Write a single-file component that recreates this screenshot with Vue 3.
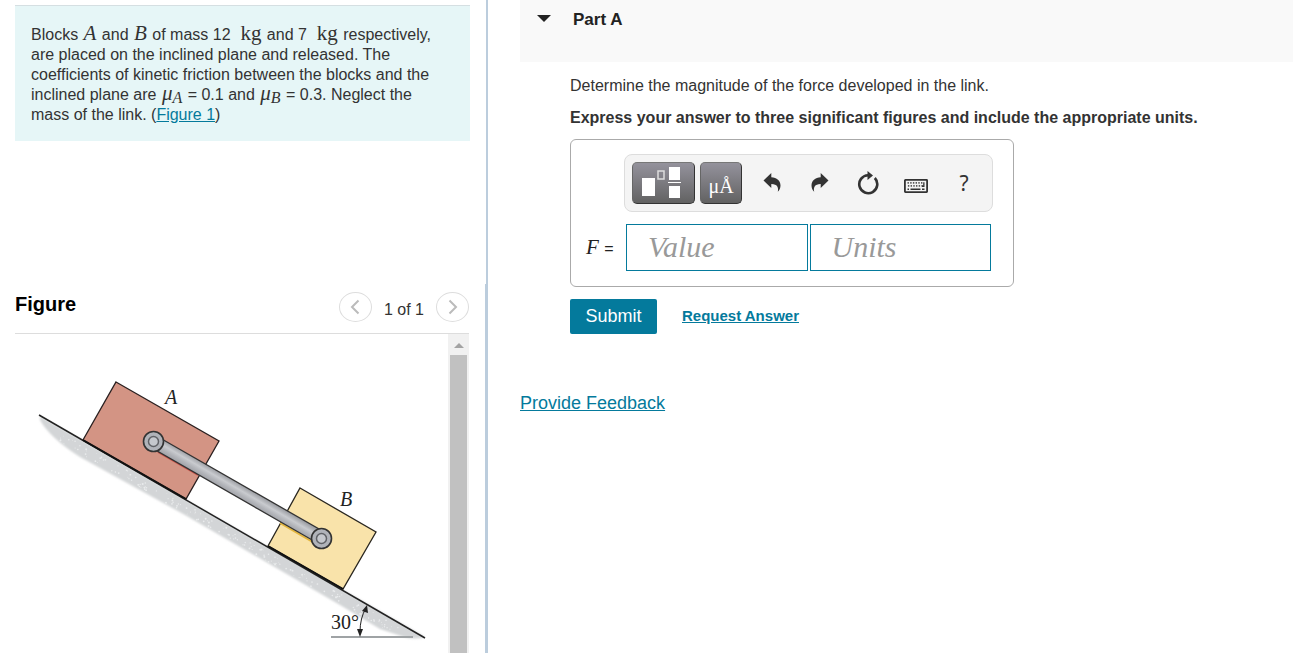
<script setup>
import { ref } from 'vue'

const value = ref('')
const units = ref('')

const keyDots = []
for (let row = 0; row < 2; row++) {
  for (let col = 0; col < 6; col++) {
    keyDots.push({ x: 3.5 + col * 2.7 + row * 0.4, y: 3.2 + row * 3 })
  }
}

// Light flecks scattered along the band below the incline
let seed = 7
const random = () => {
  seed = (seed * 16807) % 2147483647
  return seed / 2147483647
}
const specks = Array.from({ length: 170 }, () => {
  const along = 20 + random() * 340
  const depth = 5 + random() * 10
  return { x: 40 + along, y: 415 + along * 0.578 + depth, r: 0.4 + random() * 0.6 }
})
</script>

<template>
  <div class="page">
    <aside class="side">
      <section class="problem">
        <p>
          Blocks <i class="math">A</i> and <i class="math">B</i> of mass 12 &nbsp;<span class="math">kg</span> and 7 &nbsp;<span class="math">kg</span> respectively,<br />
          are placed on the inclined plane and released. The<br />
          coefficients of kinetic friction between the blocks and the<br />
          inclined plane are <i class="math">μ<sub>A</sub></i> = 0.1 and <i class="math">μ<sub>B</sub></i> = 0.3. Neglect the<br />
          mass of the link. (<a href="#figure">Figure 1</a>)
        </p>
      </section>

      <section id="figure" class="figure">
        <header class="figure-head">
          <h2>Figure</h2>
          <nav class="pager" aria-label="Figures">
            <button type="button" class="round" aria-label="Previous figure">
              <svg width="10" height="16" viewBox="0 0 10 16"><path d="M8.500 1.500 2 8l6.500 6.500" /></svg>
            </button>
            <span class="count">1 of 1</span>
            <button type="button" class="round" aria-label="Next figure">
              <svg width="10" height="16" viewBox="0 0 10 16"><path d="M1.500 1.500 8 8l-6.500 6.500" /></svg>
            </button>
          </nav>
        </header>

        <div class="viewer">
          <svg class="diagram" viewBox="15 334 433 319" role="img" aria-label="Blocks A and B joined by a link on a 30 degree incline">
            <defs>
              <linearGradient id="rod" gradientUnits="userSpaceOnUse" x1="241" y1="485" x2="234" y2="497">
                <stop offset="0" stop-color="#9fa1a6" />
                <stop offset="0.35" stop-color="#c9cbcf" />
                <stop offset="0.6" stop-color="#b4b6bb" />
                <stop offset="1" stop-color="#9a9ca2" />
              </linearGradient>
              <filter id="soft"><feGaussianBlur stdDeviation="1" /></filter>
            </defs>
            <path d="M40 416 425 637Q416 640 404 637L380 629 340 605 185 515 80 457Q50 438 40 420Z" fill="#d3d5d7" filter="url(#soft)" />
            <circle v-for="(s, i) in specks" :key="i" :cx="s.x" :cy="s.y" :r="s.r" fill="#e9ebec" />
            <path d="M331 637H413" stroke="#9fa3a5" stroke-width="2" />
            <path d="M39 415 425 638" stroke="#222" stroke-width="1.500" />
            <path d="M116 382 219 441 186 499 83 440Z" fill="#d39484" stroke="#2a2020" stroke-width="1.300" />
            <path d="M300 488 376 532 343 589 268 546Z" fill="#f9e3aa" stroke="#2a2720" stroke-width="1.300" />
            <path d="M83 440 186 499M268 546 343 589" stroke="#111" stroke-width="2" />
            <path d="M158 452 198 475" stroke="#cc5148" stroke-width="2" />
            <path d="M280 523 316 544" stroke="#e4b63d" stroke-width="2" />
            <path d="M160 438 326 533 319 544 152 448Z" fill="url(#rod)" stroke="#333" stroke-width="1.300" />
            <g v-for="p in [[153.5, 441.5], [321.5, 538.5]]" :key="p[0]">
              <circle :cx="p[0]" :cy="p[1]" r="10" fill="#b0b3b9" stroke="#333" stroke-width="1.600" />
              <circle :cx="p[0]" :cy="p[1]" r="5" fill="#c5c8cd" stroke="#606267" stroke-width="1.500" />
            </g>
            <path d="M366 608Q360 618 360 632" fill="none" stroke="#222" />
            <path d="M367 605 368 613 362 611ZM360 637 357 629H363Z" fill="#222" />
            <text x="165" y="404" class="tag">A</text>
            <text x="340" y="506" class="tag">B</text>
            <text x="331" y="629" class="angle">30°</text>
          </svg>
          <div class="scroll" aria-hidden="true">
            <span class="scroll-up"></span>
            <span class="thumb"></span>
          </div>
        </div>
      </section>
    </aside>

    <main class="main">
      <header class="part-head">
        <span class="caret"></span>
        <h1>Part A</h1>
      </header>

      <form class="part" @submit.prevent>
        <p>Determine the magnitude of the force developed in the link.</p>
        <p class="strong">Express your answer to three significant figures and include the appropriate units.</p>

        <div class="answer">
          <div class="toolbar">
            <button type="button" class="dark wide" aria-label="Templates">
              <svg width="61" height="40" viewBox="0 0 61 40">
                <path d="M9 15h13v18H9zM36 4h11v13H36zM36 23h11v12H36zM35 19h13v1H35z" fill="#fff" />
                <rect x="25" y="8" width="6" height="8" fill="none" stroke="#ddd" stroke-width="1.500" />
              </svg>
            </button>
            <button type="button" class="dark narrow" aria-label="Units and symbols">μÅ</button>
            <div class="tools">
              <button type="button" class="tool" aria-label="Undo">
                <svg width="18" height="20" viewBox="0 0 18 20"><path d="M.500 7.500 8.300 0v4.300c5.500.300 9.200 3.300 9.200 8.200 0 2.600-1 4.800-2.700 6.300 1-4.100-.600-7.800-6.500-7.700V15z" /></svg>
              </button>
              <button type="button" class="tool" aria-label="Redo">
                <svg width="18" height="20" viewBox="0 0 18 20"><path d="M17.500 7.500 9.700 0v4.300C4.200 4.600.500 7.600.500 12.500c0 2.600 1 4.800 2.700 6.300-1-4.100.600-7.800 6.500-7.700V15z" /></svg>
              </button>
              <button type="button" class="tool" aria-label="Reset">
                <svg width="22" height="24" viewBox="0 0 22 24"><path d="M17.800 7A9 9 0 1 1 11 4.200" fill="none" stroke="#333" stroke-width="2.600" /><path d="M10.500 0 16 4.500 10.500 9z" /></svg>
              </button>
              <button type="button" class="tool low" aria-label="Keyboard">
                <svg width="24" height="14" viewBox="0 0 24 14">
                  <rect x=".900" y=".900" width="22.200" height="12.200" rx=".500" fill="none" stroke="#333" stroke-width="1.800" />
                  <rect v-for="(k, i) in keyDots" :key="i" :x="k.x" :y="k.y" width="1.400" height="1.400" />
                  <path d="M3.500 9.400H5v1.500H3.500zM6.500 9.400h10v1.500h-10zM18 9.400h2.500v1.500H18zM19.200 3.200h1.300v4.700h-2.500V6.500h1.200z" />
                </svg>
              </button>
              <button type="button" class="tool help" aria-label="Help">?</button>
            </div>
          </div>
          <div class="entry">
            <label for="value"><i>F</i> =</label>
            <input id="value" v-model="value" type="text" placeholder="Value" />
            <input id="units" v-model="units" type="text" placeholder="Units" aria-label="Units" />
          </div>
        </div>

        <div class="actions">
          <button type="submit" class="submit">Submit</button>
          <a href="#answer" class="request">Request Answer</a>
        </div>
      </form>

      <a href="#feedback" class="feedback">Provide Feedback</a>
    </main>
  </div>
</template>

<style>
body {
  margin: 0;
  background: #fff;
}
</style>

<style scoped>
.page {
  display: grid;
  grid-template-columns: 486px minmax(0, 1fr);
  height: 100vh;
  overflow: hidden;
  font-family: "Liberation Sans", Arial, sans-serif;
  font-size: 16px;
  line-height: 20px;
  color: #333;
}
.page * {
  box-sizing: border-box;
}
h1, h2, p {
  margin: 0;
}
a {
  color: #047a9c;
}
button {
  padding: 0;
  font: inherit;
  color: inherit;
}

.side {
  display: flex;
  flex-direction: column;
  padding-top: 5px;
  min-height: 0;
}
.problem {
  margin: 0 16px 0 15px;
  padding: 19px 16px 16px;
  border-top: 1px solid #d5dfe2;
  background: #e6f6f7;
}
.math {
  padding: 0 1px;
  font-family: "Liberation Serif", serif;
  font-size: 21px;
  line-height: 0;
}
.math sub {
  font-size: 16px;
  line-height: 0;
  vertical-align: -3px;
}

.figure {
  display: flex;
  flex: 1;
  flex-direction: column;
  min-height: 0;
  margin-top: 143px;
  padding: 0 16px 0 15px;
  border-right: 1px solid #bccddd;
}
.figure-head {
  display: flex;
  align-items: center;
  justify-content: space-between;
  height: 50px;
  border-bottom: 1px solid #ddd;
}
h2 {
  margin-bottom: 10px;
  font-size: 20px;
  line-height: 24px;
  color: #000;
}
.pager {
  display: flex;
  align-items: center;
  gap: 12px;
  margin-bottom: 3px;
}
.count {
  padding-top: 5px;
}
.round {
  display: flex;
  align-items: center;
  justify-content: center;
  width: 33px;
  height: 30px;
  border: 1px solid #ddd;
  border-radius: 50%;
  background: #fff;
}
.round path {
  fill: none;
  stroke: #bbb;
  stroke-width: 2;
}
.viewer {
  display: flex;
  flex: 1;
  min-height: 0;
  overflow: hidden;
}
.diagram {
  display: block;
  flex: 1;
  min-width: 0;
  align-self: flex-start;
}
.tag {
  font: italic 20px "Liberation Serif", serif;
  fill: #222;
}
.angle {
  font: 20px "Liberation Serif", serif;
  fill: #222;
}
.scroll {
  display: flex;
  flex-direction: column;
  align-items: center;
  width: 21px;
  background: #f1f1f1;
}
.scroll-up {
  margin: 9px 0 7px;
  border: 5px solid transparent;
  border-top-width: 0;
  border-bottom-color: #a3a3a3;
}
.thumb {
  flex: 1;
  width: 17px;
  background: #c1c1c1;
}

.main {
  padding-left: 32px;
  border-left: 2px solid #bccddd;
}
.part-head {
  display: flex;
  align-items: flex-start;
  gap: 22px;
  height: 62px;
  padding: 10px 17px;
  background: #f9f9f9;
}
.caret {
  margin-top: 5px;
  border: 7px solid transparent;
  border-top-color: #222;
  border-bottom-width: 0;
}
h1 {
  font-size: 17px;
  line-height: 20px;
  color: #222;
}
.part {
  padding: 14px 16px 0 50px;
}
.part p {
  margin-bottom: 12px;
}
.part .strong {
  margin-bottom: 11px;
  font-weight: bold;
}
.answer {
  max-width: 444px;
  padding: 14px 20px 15px 15px;
  border: 1px solid #aaa;
  border-radius: 6px;
}
.toolbar {
  display: flex;
  align-items: center;
  height: 58px;
  margin-left: 38px;
  padding-left: 7px;
  border: 1px solid #ddd;
  border-radius: 8px;
  background: #f4f4f4;
}
.dark {
  height: 42px;
  margin-right: 5px;
  border: 1px solid #333;
  border-top-color: #777;
  border-left-color: #666;
  border-radius: 5px;
  background: linear-gradient(#94929c, #626262);
  color: #fff;
}
.dark svg {
  display: block;
}
.wide {
  width: 63px;
}
.narrow {
  width: 42px;
  padding-top: 6px;
  font-family: "Liberation Serif", serif;
  font-size: 20px;
}
.tools {
  display: flex;
  margin-left: 1px;
}
.tool {
  display: flex;
  align-items: center;
  justify-content: center;
  width: 48px;
  height: 42px;
  border: 0;
  background: none;
  fill: #333;
}
.low {
  padding-top: 6px;
}
.help {
  font-family: "Noto Sans", sans-serif;
  font-size: 21px;
}
.entry {
  display: flex;
  gap: 2px;
  margin: 12px 2px 0 0;
}
.entry label {
  width: 38px;
  height: 46px;
  line-height: 46px;
  color: #222;
}
.entry label i {
  margin-right: 1px;
  font-family: "Liberation Serif", serif;
  font-size: 21px;
}
.entry input {
  flex: 1;
  min-width: 0;
  height: 47px;
  padding: 0 21px 2px;
  border: 1px solid #047a9c;
  border-radius: 0;
  background: #fff;
  font: italic 30px "Liberation Serif", serif;
  color: #333;
}
.entry input::placeholder {
  color: #999;
  opacity: 1;
}
.actions {
  display: flex;
  align-items: center;
  gap: 25px;
  margin-top: 12px;
}
.submit {
  display: block;
  width: 87px;
  height: 35px;
  padding-bottom: 2px;
  border: 0;
  border-radius: 2px;
  background: #047a9c;
  font-size: 18px;
  color: #fff;
}
.request {
  padding-bottom: 2px;
  font-size: 15px;
  font-weight: bold;
}
.feedback {
  display: inline-block;
  margin-top: 59px;
  font-size: 18px;
}
</style>
